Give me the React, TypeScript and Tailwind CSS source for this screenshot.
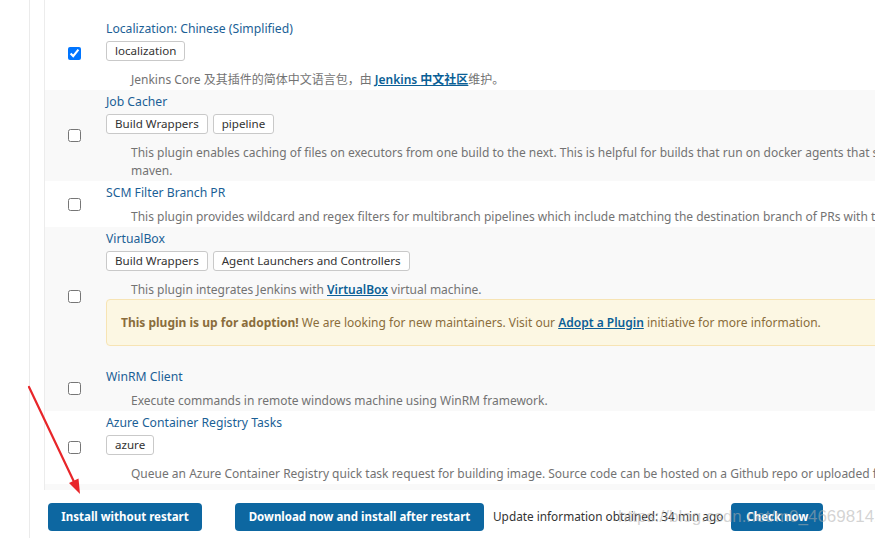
import React from "react";

const FONT = { fontFamily: '"Noto Sans", "Noto Sans CJK SC", sans-serif' };

function Tag({ children }: { children: React.ReactNode }) {
  return (
    <span className="inline-flex h-[20px] items-center rounded-[3px] border border-[#c9c9c9] bg-white px-[8px] text-[11.6px] leading-none text-[#333]">
      {children}
    </span>
  );
}

type RowProps = {
  title: string;
  tags?: string[];
  lines: React.ReactNode[];
  gray?: boolean;
  checked?: boolean;
  extra?: React.ReactNode;
};

function Row({ title, tags, lines, gray, checked, extra }: RowProps) {
  return (
    <div className={`flex ${gray ? "bg-[#f9f9f9]" : "bg-white"}`}>
      <div className="flex w-[58px] shrink-0 items-center justify-center">
        <input
          type="checkbox"
          defaultChecked={checked}
          className="m-0 h-[13px] w-[13px]"
        />
      </div>
      <div className="flex-1 pl-[3px] pt-[3px] pb-[1px]">
        <div className="text-[12.2px] leading-[18px] text-[#1b5f96] whitespace-nowrap">{title}</div>
        {tags && (
          <div className="mt-[3px] flex gap-[5px]">
            {tags.map((t) => (
              <Tag key={t}>{t}</Tag>
            ))}
          </div>
        )}
        <div className={`${tags ? "mt-[10px]" : "mt-[6px]"} pl-[25px] text-[12px] leading-[18px] text-[#737373]`}>
          {lines.map((l, i) => (
            <div key={i} className="whitespace-nowrap">
              {l}
            </div>
          ))}
        </div>
        {extra}
      </div>
    </div>
  );
}

const linkCls = "font-semibold text-[#0b5f96] underline";

export default function App() {
  return (
    <div className="relative h-[538px] w-[875px] overflow-hidden bg-white" style={FONT}>
      <div className="flex h-full">
        <div className="w-[29px] shrink-0" />
        <div className="flex-1 border-l border-[#ebebeb] pl-[14px]">
          <div className="w-[1200px] border-l border-[#ececec]">
            <div className="h-[17px] bg-white" />
            <Row
              title="Localization: Chinese (Simplified)"
              tags={["localization"]}
              checked
              lines={[
                <>
                  Jenkins Core 及其插件的简体中文语言包，由 <span className={linkCls}>Jenkins 中文社区</span>维护。
                </>,
              ]}
            />
            <Row
              gray
              title="Job Cacher"
              tags={["Build Wrappers", "pipeline"]}
              lines={[
                "This plugin enables caching of files on executors from one build to the next. This is helpful for builds that run on docker agents that start clean every time,",
                "maven.",
              ]}
            />
            <Row
              title="SCM Filter Branch PR"
              lines={[
                "This plugin provides wildcard and regex filters for multibranch pipelines which include matching the destination branch of PRs with the filters.",
              ]}
            />
            <Row
              gray
              title="VirtualBox"
              tags={["Build Wrappers", "Agent Launchers and Controllers"]}
              lines={[
                <>
                  This plugin integrates Jenkins with <span className={linkCls}>VirtualBox</span> virtual machine.
                </>,
              ]}
              extra={
                <div className="mb-[18px] flex h-[47px] w-[1000px] items-center rounded-[4px] border border-[#f7e4b4] bg-[#fcf7e3] pl-[14px] text-[12px] text-[#8a6d3b] whitespace-nowrap">
                  <span className="font-bold">This plugin is up for adoption!</span>
                  <span>&nbsp;We are looking for new maintainers. Visit our&nbsp;</span>
                  <span className={linkCls}>Adopt a Plugin</span>
                  <span>&nbsp;initiative for more information.</span>
                </div>
              }
            />
            <Row
              gray
              title="WinRM Client"
              lines={["Execute commands in remote windows machine using WinRM framework."]}
            />
            <Row
              title="Azure Container Registry Tasks"
              tags={["azure"]}
              lines={[
                "Queue an Azure Container Registry quick task request for building image. Source code can be hosted on a Github repo or uploaded from local.",
              ]}
            />
            <div className="h-[6px] bg-[#f9f9f9]" />
          </div>
          <div className="mt-[13px] flex items-center pl-[4px] text-[11.8px]">
            <button className="h-[28px] w-[154px] whitespace-nowrap rounded-[4px] bg-[#0d67a1] text-[11.5px] font-bold text-white">
              Install without restart
            </button>
            <button className="ml-[33px] h-[28px] w-[249px] whitespace-nowrap rounded-[4px] bg-[#0d67a1] text-[11.5px] font-bold text-white">
              Download now and install after restart
            </button>
            <span className="ml-[9px] whitespace-nowrap text-[#333]">Update information obtained: 34 min ago</span>
            <button className="ml-[8px] h-[28px] w-[92px] whitespace-nowrap rounded-[4px] bg-[#0d67a1] text-[11.5px] font-bold text-white">
              Check now
            </button>
          </div>
        </div>
      </div>

      <svg className="pointer-events-none absolute left-0 top-0" width="875" height="538">
        <line x1="29" y1="387" x2="76" y2="486" stroke="#e8262a" strokeWidth="2.2" strokeLinecap="round" />
        <polygon points="80,494 78.5,478.5 69,483" fill="#e8262a" />
      </svg>

      <div
        className="pointer-events-none absolute left-[618px] top-[506px] whitespace-nowrap text-[17px] leading-[22px] text-[rgba(175,175,175,0.55)]"
        style={{ fontFamily: '"Liberation Sans", sans-serif' }}
      >
        https://blog.csdn.net/m0_46698142
      </div>
    </div>
  );
}
